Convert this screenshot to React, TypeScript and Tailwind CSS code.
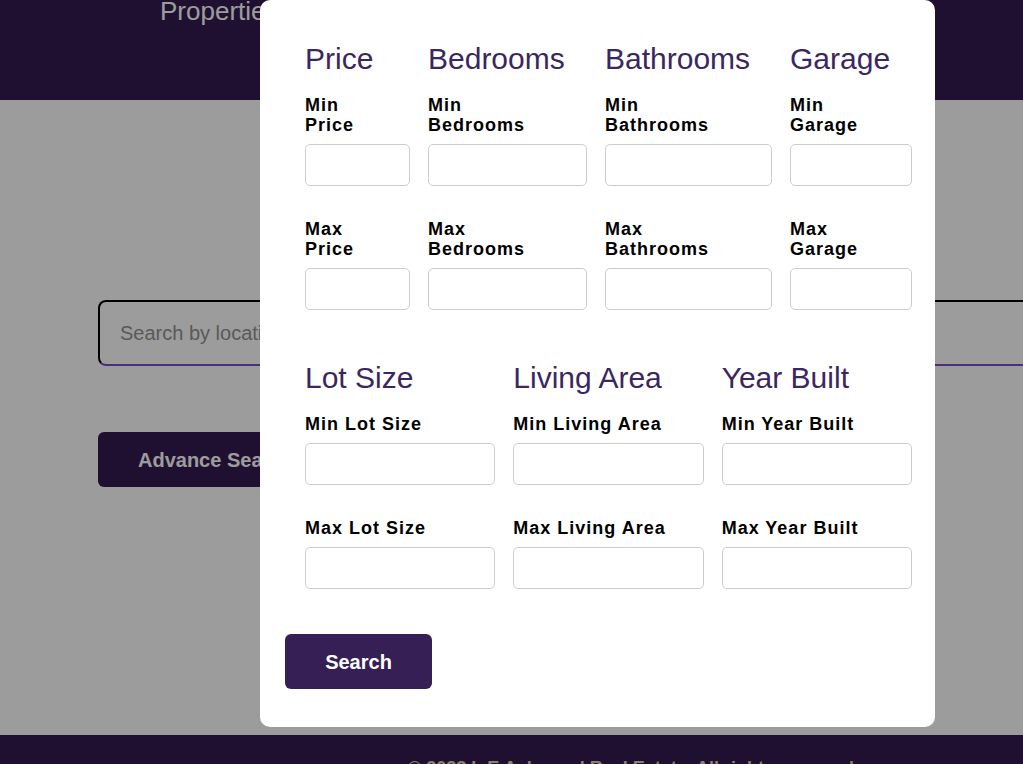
import React from 'react'

const font = { fontFamily: '"Liberation Sans", Arial, sans-serif' }

const topGroups = [
  { title: 'Price', min: 'Min Price', max: 'Max Price' },
  { title: 'Bedrooms', min: 'Min Bedrooms', max: 'Max Bedrooms' },
  { title: 'Bathrooms', min: 'Min Bathrooms', max: 'Max Bathrooms' },
  { title: 'Garage', min: 'Min Garage', max: 'Max Garage' },
]

const bottomGroups = [
  { title: 'Lot Size', min: 'Min Lot Size', max: 'Max Lot Size' },
  { title: 'Living Area', min: 'Min Living Area', max: 'Max Living Area' },
  { title: 'Year Built', min: 'Min Year Built', max: 'Max Year Built' },
]

function Field({ label, narrow }: { label: string; narrow?: boolean }) {
  return (
    <div className="flex flex-col">
      <label
        className={`mb-[9px] text-[18px] leading-5 font-bold tracking-[1px] text-black ${narrow ? 'w-min' : ''}`}
      >
        {label}
      </label>
      <input
        type="text"
        className="h-[42px] w-full rounded-[5px] border border-[#cccccc] bg-white px-3 text-base focus:outline-none"
      />
    </div>
  )
}

function Group({ title, min, max, narrow }: { title: string; min: string; max: string; narrow?: boolean }) {
  return (
    <div className="flex flex-col">
      <h3 className="mb-5 text-[30px] leading-[33px] font-normal text-[#3a2761] whitespace-nowrap">{title}</h3>
      <Field label={min} narrow={narrow} />
      <div className="mt-[33px]">
        <Field label={max} narrow={narrow} />
      </div>
    </div>
  )
}

export default function App() {
  return (
    <div className="relative min-h-screen overflow-hidden bg-white" style={font}>
      {/* page behind the modal */}
      <header className="flex h-[100px] flex-col bg-[#331a4f]">
        <div className="pl-[160px] -mt-1 text-[26px] leading-[30px] text-white">Properties</div>
      </header>

      <main className="h-[635px] pt-[200px] pl-[98px]">
        <input
          type="text"
          placeholder="Search by location"
          className="h-[66px] w-[940px] rounded-lg border-2 border-black border-b-[#7b4dc8] bg-white px-5 text-[20px] text-gray-800 placeholder:text-[#939393] focus:outline-none"
        />
        <div className="mt-[66px]">
          <button className="h-[55px] rounded-md bg-[#331a4f] px-10 text-[20px] font-bold text-white">
            Advance Search
          </button>
        </div>
      </main>

      <footer className="h-[80px] bg-[#331a4f] pt-5 pl-[408px]">
        <p className="text-[18px] font-bold text-[#e4d2b8] whitespace-nowrap">
          © 2023 InE Ashwood Real Estate. All rights reserved.
        </p>
      </footer>

      {/* backdrop */}
      <div className="fixed inset-0 bg-black/[0.39]" />

      {/* filter modal */}
      <div className="absolute left-[260px] top-0 w-[675px] rounded-[10px] bg-white pt-[42px] pb-[38px] pl-[25px] pr-[23px]">
        <div className="pl-5">
          <div className="grid grid-cols-[105px_159px_167px_122px] gap-x-[18px]">
            {topGroups.map((g) => (
              <Group key={g.title} {...g} narrow />
            ))}
          </div>

          <div className="mt-[51px] grid grid-cols-3 gap-x-[18px]">
            {bottomGroups.map((g) => (
              <Group key={g.title} {...g} />
            ))}
          </div>
        </div>

        <button className="mt-[45px] h-[55px] w-[147px] rounded-md bg-[#351f55] text-[20px] font-bold text-white">
          Search
        </button>
      </div>
    </div>
  )
}
